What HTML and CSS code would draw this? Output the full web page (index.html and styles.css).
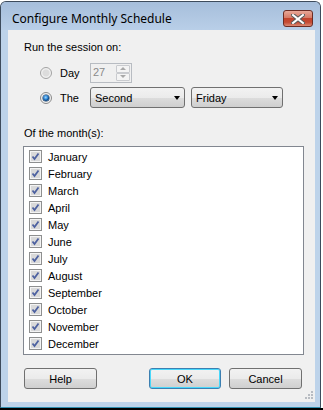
FILE: index.html
```html
<!DOCTYPE html>
<html lang="en">
<head>
  <meta charset="UTF-8">
  <meta name="viewport" content="width=device-width, initial-scale=1.0">
  <title>Configure Monthly Schedule</title>
  <link rel="stylesheet" href="styles.css">
</head>
<body>

  <div class="window">
    <!-- Title bar -->
    <div class="titlebar">
      <span class="title">Configure Monthly Schedule</span>
      <div class="close">
        <svg width="14" height="10" viewBox="0 0 14 10">
          <path d="M2 1 L12 9 M12 1 L2 9" stroke="#5a5a5a" stroke-width="4" stroke-linecap="square"/>
          <path d="M2 1 L12 9 M12 1 L2 9" stroke="#fff" stroke-width="2" stroke-linecap="square"/>
        </svg>
      </div>
    </div>

    <div class="client">
      <div class="label">Run the session on:</div>

      <div class="row row-day">
        <span class="radio"></span>
        <span class="opt">Day</span>
        <div class="spinner">
          <span class="spin-value">27</span>
          <div class="spin-buttons">
            <div class="spin-btn"><i class="up"></i></div>
            <div class="spin-btn"><i class="down"></i></div>
          </div>
        </div>
      </div>

      <div class="row row-the">
        <span class="radio checked"></span>
        <span class="opt">The</span>
        <div class="combo combo-week">Second<i class="arrow"></i></div>
        <div class="combo combo-day">Friday<i class="arrow"></i></div>
      </div>

      <div class="label label-months">Of the month(s):</div>

      <div class="listbox" id="months"></div>

      <div class="buttons">
        <button class="btn">Help</button>
        <button class="btn btn-ok">OK</button>
        <button class="btn">Cancel</button>
      </div>

      <!-- size grip -->
      <svg class="grip" width="9" height="9" viewBox="0 0 9 9">
        <g fill="#b8bcc2">
          <rect x="7" y="1" width="2" height="2"/>
          <rect x="4" y="4" width="2" height="2"/>
          <rect x="7" y="4" width="2" height="2"/>
          <rect x="1" y="7" width="2" height="2"/>
          <rect x="4" y="7" width="2" height="2"/>
          <rect x="7" y="7" width="2" height="2"/>
        </g>
      </svg>
    </div>
  </div>

  <script>
    const months = ['January', 'February', 'March', 'April', 'May', 'June',
      'July', 'August', 'September', 'October', 'November', 'December'];
    const list = document.getElementById('months');

    // Build one checked row for each month
    months.forEach(name => {
      const item = document.createElement('div');
      item.className = 'item';
      item.innerHTML =
        '<svg class="check" width="13" height="13" viewBox="0 0 13 13">' +
        '<rect x="0.5" y="0.5" width="12" height="12" fill="#f4f4f4" stroke="#8e8f8f"/>' +
        '<rect x="2" y="2" width="9" height="9" fill="#d9d9d9"/>' +
        '<path d="M3.5 6.5 L5.5 9 L9.5 3.5" fill="none" stroke="#4d61a0" stroke-width="1.8"/>' +
        '</svg><span>' + name + '</span>';
      list.appendChild(item);
    });
  </script>
</body>
</html>
```

FILE: styles.css
```css
body {
  margin: 0;
  height: 410px;
  background: linear-gradient(to bottom, #fff 408px, #000 408px);
  font-family: "Liberation Sans", Arial, sans-serif;
  font-size: 11px;
  color: #000;
}
.window {
  margin-top: 1px;
  width: 319px;
  height: 405px;
  border: 1px solid #3d4b5c;
  border-bottom-color: #2f8fb0;
  border-radius: 6px 6px 0 0;
  background: #bdd3ea;
  display: flex;
  flex-direction: column;
  padding: 0;
}
/* Title bar */
.titlebar {
  height: 28px;
  display: flex;
  align-items: flex-start;
  background: linear-gradient(to bottom, #a6bedb, #b9cfe8);
  border-radius: 5px 5px 0 0;
}
.title {
  font-family: "Noto Sans", sans-serif;
  font-size: 12px;
  padding-left: 11px;
  margin-top: 9px;
  line-height: 16px;
  color: #000;
}
.close {
  margin-left: auto;
  margin-right: 7px;
  margin-top: 8px;
  width: 28px;
  height: 15px;
  border: 1px solid #6b2c24;
  border-radius: 3px;
  background: linear-gradient(to bottom, #e8a898 0%, #d67a66 45%, #c2432c 50%, #c44a33 75%, #db8a74 100%);
  display: flex;
  align-items: center;
  justify-content: center;
}
/* Client area */
.client {
  position: relative;
  margin: 0 5px 5px 7px;
  height: 372px;
  background: #f0f0f0;
  padding-top: 10px;
  box-sizing: border-box;
}
.label {
  line-height: 14px;
  padding-left: 16px;
}
.row {
  display: flex;
  align-items: center;
  height: 21px;
  padding-left: 32px;
}
.row-day {
  margin-top: 8px;
}
.row-the {
  margin-top: 4px;
}
.opt {
  width: 30px;
  padding-left: 8px;
}
.radio {
  width: 12px;
  height: 12px;
  border-radius: 50%;
  box-sizing: border-box;
  border: 1px solid #a2a2a2;
  background: radial-gradient(circle at 50% 50%, #dcdcdc 0 3px, #eeeeee 4px, #f8f8f8 6px);
  position: relative;
}
.radio.checked {
  border-color: #8a8a8a;
}
.radio.checked::after {
  content: "";
  position: absolute;
  left: 2px;
  top: 2px;
  width: 6px;
  height: 6px;
  border-radius: 50%;
  background: radial-gradient(circle at 45% 40%, #9fd8ff 0, #2f86d4 2px, #0b4a8a 3px);
  box-shadow: 0 0 0 0.5px #1c3f66;
}
/* Disabled spinner */
.spinner {
  width: 42px;
  height: 20px;
  box-sizing: border-box;
  border: 1px solid #b8bcc2;
  background: #f0f0f0;
  display: flex;
  align-items: stretch;
}
.spin-value {
  color: #8a8a8a;
  padding-left: 2px;
  line-height: 16px;
  flex: 1;
}
.spin-buttons {
  width: 14px;
  display: flex;
  flex-direction: column;
  padding: 1px 1px 1px 0;
}
.spin-btn {
  flex: 1;
  border: 1px solid #c9cbcf;
  border-radius: 1px;
  background: #f4f4f4;
  display: flex;
  align-items: center;
  justify-content: center;
}
.spin-btn i {
  width: 0;
  height: 0;
  border-left: 3px solid transparent;
  border-right: 3px solid transparent;
}
.spin-btn .up {
  border-bottom: 3px solid #a8a8a8;
}
.spin-btn .down {
  border-top: 3px solid #a8a8a8;
}
/* Combo boxes */
.combo {
  height: 21px;
  box-sizing: border-box;
  border: 1px solid #707070;
  border-radius: 3px;
  background: linear-gradient(to bottom, #f2f2f2 0%, #ebebeb 50%, #dddddd 51%, #cfcfcf 100%);
  display: flex;
  align-items: center;
  padding-left: 4px;
  line-height: 14px;
}
.combo-week {
  width: 95px;
}
.combo-day {
  width: 92px;
  margin-left: 6px;
}
.arrow {
  margin-left: auto;
  margin-right: 4px;
  width: 0;
  height: 0;
  border-left: 3.5px solid transparent;
  border-right: 3.5px solid transparent;
  border-top: 4px solid #000;
}
.label-months {
  margin-top: 18px;
}
/* Month list */
.listbox {
  margin: 6px 0 0 15px;
  width: 281px;
  height: 209px;
  box-sizing: border-box;
  border: 1px solid #828790;
  background: #fff;
  padding-top: 1px;
}
.item {
  height: 17px;
  display: flex;
  align-items: center;
  padding-left: 5px;
}
.check {
  margin-right: 6px;
}
/* Dialog buttons */
.buttons {
  display: flex;
  margin-top: 13px;
  padding-left: 16px;
}
.btn {
  width: 73px;
  height: 21px;
  font-family: "Liberation Sans", Arial, sans-serif;
  font-size: 11px;
  color: #000;
  border: 1px solid #707070;
  border-radius: 3px;
  background: linear-gradient(to bottom, #f2f2f2 0%, #ebebeb 50%, #dddddd 51%, #cfcfcf 100%);
  padding: 0;
}
.btn-ok {
  width: 72px;
  margin-left: auto;
  margin-right: 8px;
  border-color: #3c7fb1;
  box-shadow: inset 0 0 0 1px #48d8fb;
}
.buttons .btn:last-child {
  margin-right: 13px;
}
.grip {
  position: absolute;
  right: 2px;
  bottom: 3px;
}
```
